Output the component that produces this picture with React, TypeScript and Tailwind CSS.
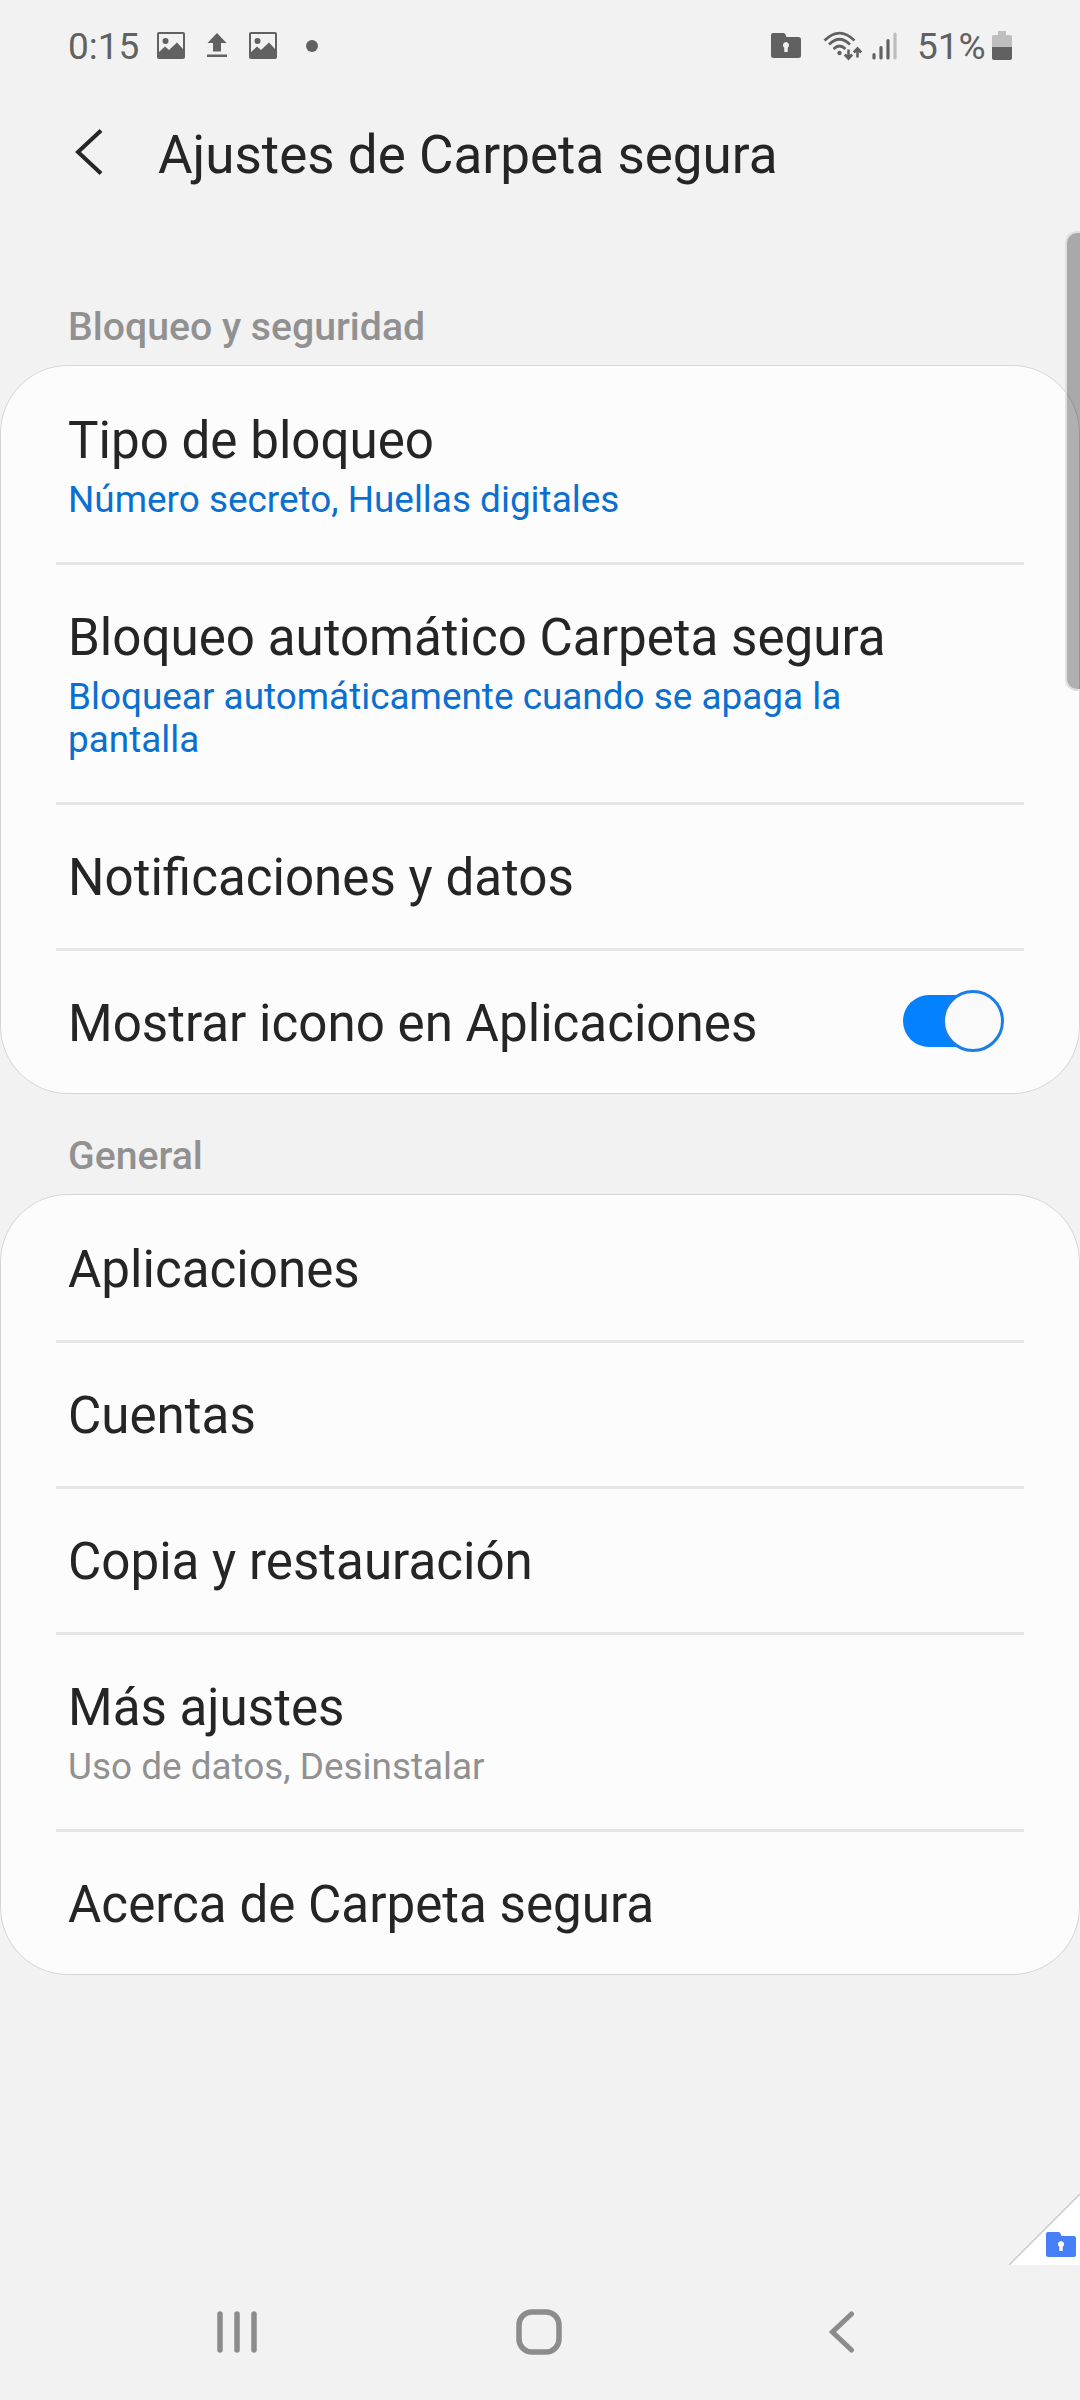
import React, { useState } from "react"

interface Item {
	title: string
	summary?: string
	active?: boolean
	toggle?: boolean
}

const lockItems: Item[] = [
	{ title: "Tipo de bloqueo", summary: "Número secreto, Huellas digitales", active: true },
	{ title: "Bloqueo automático Carpeta segura", summary: "Bloquear automáticamente cuando se apaga la pantalla", active: true },
	{ title: "Notificaciones y datos" },
	{ title: "Mostrar icono en Aplicaciones", toggle: true },
]

const generalItems: Item[] = [
	{ title: "Aplicaciones" },
	{ title: "Cuentas" },
	{ title: "Copia y restauración" },
	{ title: "Más ajustes", summary: "Uso de datos, Desinstalar" },
	{ title: "Acerca de Carpeta segura" },
]

const ImageIcon = () => (
	<svg width="28" height="27" viewBox="0 0 28 27">
		<path fillRule="evenodd" fill="#616161" d="M2 0H26Q28 0 28 2V25Q28 27 26 27H2Q0 27 0 25V2Q0 0 2 0ZM2 2V20L8 14.500L12 18L20 10.500L26 17V2Z" />
		<circle cx="8.500" cy="9" r="3" fill="#616161" />
	</svg>
)

const SecureFolder = () => (
	<svg width="30" height="25" viewBox="0 0 30 25" fill="currentColor">
		<path fillRule="evenodd" d="M2 0H12.500Q14 0 14.500 1.500L15.500 4H27.500Q30 4 30 6.500V22.500Q30 25 27.500 25H2.500Q0 25 0 22.500V2Q0 0 2 0ZM15 9A3.200 3.200 0 0 0 13.300 14.800V19H16.700V14.800A3.200 3.200 0 0 0 15 9Z" />
	</svg>
)

const StatusBar = () => (
	<div className="h-[91px] flex items-center justify-between px-[68px] text-[#616161]">
		<div className="flex items-center">
			<span className="w-[89px] pt-[3px] text-[37px] leading-[44px]">0:15</span>
			<ImageIcon />
			<svg className="ml-[22px]" width="20" height="25" viewBox="0 0 20 25" fill="#616161">
				<path d="M10 0L19.500 10H14V18.500H6V10H0.500ZM0 21.500H20V24H0Z" />
			</svg>
			<div className="ml-[22px]">
				<ImageIcon />
			</div>
			<div className="ml-[29px] w-3 h-3 rounded-full bg-[#616161]" />
		</div>
		<div className="flex items-center">
			<SecureFolder />
			<svg className="ml-[22px]" width="40" height="30" viewBox="0 0 40 30" fill="none" stroke="#616161" strokeWidth="2.600">
				<path d="M1.500 9.500Q16.500 -5.500 31.500 9.500M6 13.500Q16.500 3 27 13.500M10.500 18Q16.500 12 22.500 18" />
				<circle cx="16.500" cy="22" r="2.200" fill="#616161" stroke="none" />
				<path d="M25.500 18.500V27M21.800 23.500L25.500 27.500L29.200 23.500M34.500 26.500V18M30.800 21.500L34.500 17.500L38.200 21.500" />
			</svg>
			<svg className="ml-[9px]" width="27" height="28" viewBox="0 0 27 28" strokeWidth="3.200" strokeLinecap="round" stroke="#616161">
				<path d="M2 22.500V26M9 15.500V26M16 8.500V26" />
				<path d="M23 2V26" stroke="#bdbdbd" />
			</svg>
			<span className="ml-[18px] w-[75px] pt-[3px] text-[37px] leading-[44px] whitespace-nowrap">51%</span>
			<svg width="20" height="29" viewBox="0 0 20 29">
				<path fill="#bfbfbf" d="M6 0H14V4H18Q20 4 20 6V16H0V6Q0 4 2 4H6Z" />
				<path fill="#616161" d="M0 16H20V27Q20 29 18 29H2Q0 29 0 27Z" />
			</svg>
		</div>
	</div>
)

const Switch = ({ on, onClick }: { on: boolean; onClick: () => void }) => (
	<button role="switch" aria-checked={on} onClick={onClick} className="relative -mt-[11px] -mb-[6px] w-[102px] h-[62px] flex items-center">
		<span className={`w-[98px] h-[52px] rounded-full ${on ? "bg-[#0381fe]" : "bg-[#b5b5b5]"}`} />
		<span className={`absolute top-0 w-[62px] h-[62px] rounded-full bg-[#fafafa] border-[3px] ${on ? "right-0 border-[#1a7ee6]" : "left-0 border-[#9a9a9a]"}`} />
	</button>
)

const Row = ({ item }: { item: Item }) => {
	const [on, setOn] = useState(true)

	return (
		<div className="group">
			<div className="pl-[68px] pr-[76px] pt-[42px] pb-10 flex items-center justify-between">
				<div className="w-[840px]">
					<p className="text-[51.150px] leading-[61px] text-[#252525]">{item.title}</p>
					{item.summary && <p className={`text-[36.900px] leading-[43px] pt-[7px] pb-px ${item.active ? "text-[#0a6fd0]" : "text-[#919191]"}`}>{item.summary}</p>}
				</div>
				{item.toggle && <Switch on={on} onClick={() => setOn(!on)} />}
			</div>
			<div className="mx-14 h-[3px] bg-[#e6e6e6] group-last:hidden" />
		</div>
	)
}

const Card = ({ items }: { items: Item[] }) => (
	<div className="pt-[3px] bg-[#fcfcfc] inset-ring inset-ring-[#d5d5d5] rounded-[68px]">
		{items.map((item) => (
			<Row key={item.title} item={item} />
		))}
	</div>
)

const App = () => {
	return (
		<div className="relative w-[1080px] h-[2400px] bg-[#f2f2f2] overflow-hidden flex flex-col font-['Roboto',sans-serif]">
			<StatusBar />
			<header className="h-[125px] flex items-center pl-[75px]">
				<svg className="mb-[3px]" width="28" height="46" viewBox="0 0 28 46" fill="none" stroke="#252525" strokeWidth="4">
					<path d="M26 1.500L3 23L26 44.500" />
				</svg>
				<h1 className="mt-[3px] ml-[55px] text-[53px] leading-[64px] text-[#252525]">Ajustes de Carpeta segura</h1>
			</header>
			<h2 className="mt-[85px] h-[64px] pl-[68px] text-[39.200px] leading-[52px] font-medium text-[#919191]">Bloqueo y seguridad</h2>
			<Card items={lockItems} />
			<h2 className="h-[100px] pt-[36px] pl-[68px] text-[39.200px] leading-[52px] font-medium text-[#919191]">General</h2>
			<Card items={generalItems} />
			<nav className="mt-auto h-[136px] flex items-center pl-[217px] text-[#8c8c8c]">
				<svg width="40" height="42" viewBox="0 0 40 42" stroke="currentColor" strokeWidth="5.500" strokeLinecap="round">
					<path d="M3 3V39M20 3V39M37 3V39" />
				</svg>
				<svg className="ml-[259px]" width="46" height="46" viewBox="0 0 46 46" fill="none" stroke="currentColor" strokeWidth="5.500">
					<rect x="3" y="3" width="40" height="40" rx="13" />
				</svg>
				<svg className="ml-[267px]" width="26" height="42" viewBox="0 0 26 42" fill="none" stroke="currentColor" strokeWidth="5" strokeLinecap="round">
					<path d="M22.500 3L3.500 21L22.500 39" />
				</svg>
			</nav>
			{/* scroll handle */}
			<div className="absolute right-0 top-[231px] w-[15px] h-[460px] rounded-l-[12px] bg-black/30 border-2 border-r-0 border-[#e0e0e0]" />
			{/* secure folder corner mark */}
			<div className="absolute right-0 top-[2193px] w-[72px] h-[72px]">
				<svg width="72" height="72" viewBox="0 0 72 72">
					<path d="M72 2L2 72H72Z" fill="#ffffff" />
					<path d="M72 1L1 72" stroke="#c9c9c9" strokeWidth="1.500" />
				</svg>
				<div className="absolute right-[4px] bottom-[8px] text-[#467ff7]">
					<SecureFolder />
				</div>
			</div>
		</div>
	)
}

export default App
